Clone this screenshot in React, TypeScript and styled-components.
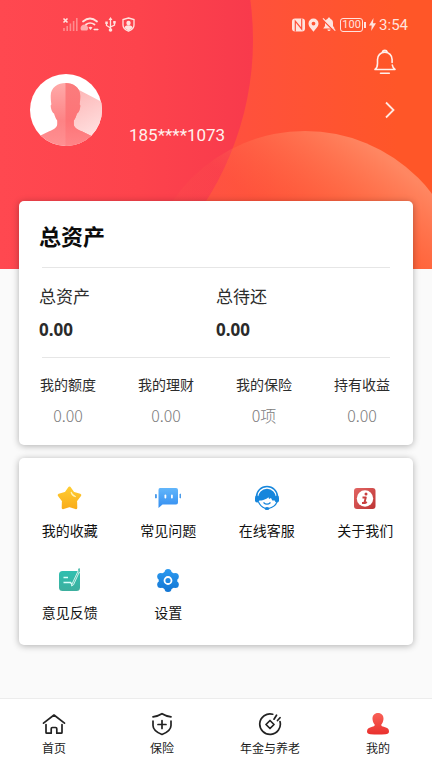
import React from "react";
import styled, { createGlobalStyle } from "styled-components";

const GlobalStyle = createGlobalStyle`
  *, *::before, *::after { box-sizing: border-box; }
  html, body { margin: 0; }
  body {
    background: #fafafa;
    color: #1c1c1c;
    font-family: "Noto Sans", "Noto Sans CJK SC", sans-serif;
  }
  h1, h2, dl, dt, dd, ul, p { margin: 0; padding: 0; }
  ul { list-style: none; }
  button { border: 0; padding: 0; background: none; font: inherit; color: inherit; cursor: pointer; }
  a { color: inherit; text-decoration: none; }
  svg { display: block; }
`;

const Page = styled.div`
  min-height: 100vh;
  display: flex;
  flex-direction: column;
`;

const Hero = styled.header`
  position: relative;
  height: 269px;
  color: #fff;
  overflow: hidden;
  background: linear-gradient(90deg, #ff5040 50%, #ff5628 92%);
`;

const HeroArt = styled.svg`
  position: absolute;
  inset: 0;
  width: 100%;
  height: 100%;
`;

const HeroContent = styled.div`
  position: relative;
  display: flex;
  flex-direction: column;
`;

const StatusBar = styled.div`
  display: flex;
  justify-content: space-between;
  align-items: center;
  height: 49px;
  padding: 0 24px 0 62px;
  color: #ffe3de;
`;

const StatusGroup = styled.div<{ $gap: number }>`
  display: flex;
  align-items: center;
  gap: ${(p) => p.$gap}px;
`;

const Battery = styled.span`
  position: relative;
  width: 23px;
  height: 14px;
  margin: 0 3px 0 1px;
  border: 1px solid currentColor;
  border-radius: 3px;
  font: 11px/12px Roboto, sans-serif;
  text-align: center;

  &::after {
    content: "";
    position: absolute;
    right: -4px;
    top: 3px;
    width: 2px;
    height: 6px;
    background: currentColor;
  }
`;

const Clock = styled.span`
  font: 15px/20px Roboto, sans-serif;
`;

const Toolbar = styled.div`
  display: flex;
  justify-content: flex-end;
  padding-right: 35px;
  height: 25px;
`;

const Profile = styled.div`
  display: flex;
  align-items: flex-start;
  height: 72px;
  padding: 0 36px 0 30px;
`;

const Phone = styled.p`
  flex: 1;
  align-self: flex-end;
  margin-left: 27px;
  font: 17px/22px Roboto, sans-serif;
  color: #fff0ee;
`;

const MoreButton = styled.button`
  align-self: center;
`;

const Content = styled.main`
  position: relative;
  flex: 1;
  display: flex;
  flex-direction: column;
  gap: 13px;
  margin-top: -68px;
  padding: 0 19px 53px;
`;

const Card = styled.section`
  background: #fff;
  border-radius: 5px;
  box-shadow: 0 1px 7px rgba(0, 0, 0, 0.3);
`;

const CardTitle = styled.h1`
  padding: 18px 20px 14px;
  font-size: 22px;
  line-height: 34px;
  font-weight: 700;
  color: #0c0c0c;
`;

const Divider = styled.hr`
  height: 1px;
  margin: 0 23px;
  border: 0;
  background: #e6e6e6;
`;

const Totals = styled.dl`
  display: grid;
  grid-template-columns: 1fr 1fr;
  padding: 15px 20px 14px;
`;

const TotalLabel = styled.dt`
  font-size: 17px;
  line-height: 28px;
  color: #2c2c2c;
`;

const TotalValue = styled.dd`
  padding-top: 6px;
  font-size: 17px;
  line-height: 26px;
  font-weight: 700;
  color: #2a2a2a;
`;

const Stats = styled.dl`
  display: grid;
  grid-template-columns: repeat(4, 1fr);
  padding: 15px 2px 18px 0;
  text-align: center;
`;

const StatLabel = styled.dt`
  font-size: 14px;
  line-height: 24px;
  color: #2c2c2c;
`;

const StatValue = styled.dd`
  padding-top: 6px;
  font-family: "Noto Sans CJK SC", sans-serif;
  font-size: 16px;
  line-height: 24px;
  font-weight: 300;
  color: #7c7c7c;
`;

const Menu = styled.ul`
  display: grid;
  grid-template-columns: repeat(4, 1fr);
  row-gap: 18px;
  padding: 26px 0 15px;
`;

const MenuButton = styled.button`
  display: flex;
  flex-direction: column;
  align-items: center;
  gap: 2px;
  width: 100%;
  padding-left: 3px;
  font-size: 14px;
  line-height: 34px;
  color: #111;
`;

const TabBar = styled.nav`
  display: grid;
  grid-template-columns: repeat(4, 1fr);
  height: 70px;
  background: #fff;
  border-top: 1px solid #ececec;
`;

const Tab = styled.a`
  display: flex;
  flex-direction: column;
  align-items: center;
  gap: 4px;
  padding-top: 13px;
  font-size: 12px;
  line-height: 18px;
  color: #1c1c1c;
`;

const HeroBackdrop = () => (
  <HeroArt viewBox="0 0 432 269" preserveAspectRatio="xMidYMin slice" aria-hidden="true">
    <defs>
      <linearGradient id="disc" gradientUnits="userSpaceOnUse" x1="0" y1="0" x2="253" y2="0">
        <stop offset="0" stopColor="#ff4850" />
        <stop offset="0.55" stopColor="#fd434c" />
        <stop offset="1" stopColor="#f83a4c" />
      </linearGradient>
      <linearGradient id="dome" gradientUnits="userSpaceOnUse" x1="370" y1="145" x2="300" y2="235">
        <stop offset="0" stopColor="#ff8c68" stopOpacity="0.9" />
        <stop offset="1" stopColor="#ff6a48" stopOpacity="0.1" />
      </linearGradient>
    </defs>
    <circle cx="-47" cy="40" r="300" fill="url(#disc)" />
    <circle cx="305" cy="291" r="160" fill="url(#dome)" />
  </HeroArt>
);

const SignalIcon = () => (
  <svg width="16" height="15" viewBox="0 0 16 15" fill="none" stroke="currentColor">
    <path d="M1.500 1.500l4 4m0-4l-4 4" strokeWidth="1.600" />
    <path d="M2 14v-3M5.200 14v-5M8.400 14V6.500M11.600 14V4M14.800 14V1" strokeWidth="1.600" opacity="0.45" />
  </svg>
);

const WifiIcon = () => (
  <svg width="19" height="15" viewBox="0 0 19 15" fill="none" stroke="currentColor">
    <path d="M3 4.500Q10 -1.500 17 4.500M6 7.500Q10 4.500 14.500 7.500" strokeWidth="1.700" strokeLinecap="round" />
    <path d="M8.500 10.500Q10.500 9 12.500 10.500L10.500 13z" fill="currentColor" stroke="none" />
    <path d="M1.500 13.500a3.600 3.600 0 1 1 5.600 0z" fill="currentColor" stroke="none" opacity="0.65" />
    <path d="M13.500 12.500h5M15 11.500v2M17 11.500v2" strokeWidth="1.200" />
  </svg>
);

const UsbIcon = () => (
  <svg width="11" height="15" viewBox="0 0 11 15" fill="none" stroke="currentColor" strokeWidth="1.300">
    <path d="M5.500 2v11M5.500 11L1.500 8.500V6M5.500 10l4-2V5.500" />
    <path d="M5.500 0L7.500 3h-4zM.3 4.500h2.500V7H.3zM8.200 4h2.500v2.500H8.200z" fill="currentColor" stroke="none" />
    <circle cx="5.500" cy="13" r="1.800" fill="currentColor" stroke="none" />
  </svg>
);

const GuardIcon = () => (
  <svg width="13" height="15" viewBox="0 0 13 15" fill="none" stroke="currentColor" strokeWidth="1.300">
    <path d="M6.500 1L12 2.500V8c0 3-2 5-5.500 6.200C3 13 1 11 1 8V2.500z" />
    <circle cx="6.500" cy="6" r="2.200" fill="currentColor" stroke="none" />
    <path d="M2.500 11q0-2.800 4-2.800t4 2.800l-4 2.700z" fill="currentColor" stroke="none" />
  </svg>
);

const NfcIcon = () => (
  <svg width="13" height="14" viewBox="0 0 13 14">
    <rect x="0" y="0.500" width="13" height="13" rx="3" fill="currentColor" />
    <path d="M3.300 13.500V3.200L9.700 11V.5" fill="none" stroke="#ff513d" strokeWidth="1.200" />
  </svg>
);

const PinIcon = () => (
  <svg width="11" height="14" viewBox="0 0 11 14">
    <path fillRule="evenodd" d="M5.500.5a5 5 0 0 1 5 5C10.500 9 7 11.500 5.500 13.800 4 11.500.5 9 .5 5.500a5 5 0 0 1 5-5zm0 3.200a1.900 1.900 0 1 0 0 3.800 1.900 1.900 0 0 0 0-3.800z" fill="currentColor" />
  </svg>
);

const MutedBellIcon = () => (
  <svg width="14" height="15" viewBox="0 0 14 15">
    <path d="M7 .5q1.200 0 1.300 1.200Q11 2.700 11 6v3l1.800 2.500H1.200L3 9V6q0-3.300 2.700-4.300Q5.800.5 7 .5zM5.300 12.500h3.400Q8.300 14 7 14t-1.700-1.500z" fill="currentColor" />
    <path d="M.5 2.500L12 14" stroke="#ff5239" strokeWidth="1.400" />
    <path d="M1 1.300L13.300 13.600" stroke="currentColor" strokeWidth="1.200" />
  </svg>
);

const BoltIcon = () => (
  <svg width="7" height="13" viewBox="0 0 7 13">
    <path d="M4.500 0L0 7.500h2.700L2.200 13 7 5.200H4z" fill="currentColor" />
  </svg>
);

const BellIcon = () => (
  <svg width="24" height="26" viewBox="0 0 24 26" fill="none" stroke="#fff0eb" strokeWidth="1.600" strokeLinejoin="round" strokeLinecap="round">
    <path d="M2 20.500c2-1.500 2.500-3 2.500-6V10.500c0-4 3-7.200 7.300-7.200s7.300 3.200 7.300 7.200v3M2 20.500h20c-1.700-1.200-2.400-2.500-2.700-4.500M9.300 3.300a2.600 2.600 0 0 1 5 0M7.500 24.300h8.800" />
  </svg>
);

const ChevronIcon = () => (
  <svg width="12" height="18" viewBox="0 0 12 18" fill="none" stroke="#ffe9e2" strokeWidth="1.800">
    <path d="M2 1.500L9.500 9 2 16.500" />
  </svg>
);

const Avatar = () => (
  <svg width="72" height="72" viewBox="0 0 72 72" role="img" aria-label="头像">
    <defs>
      <clipPath id="face"><circle cx="36" cy="36" r="36" /></clipPath>
      <clipPath id="half"><path d="M35.500 0H72v72H35.500z" /></clipPath>
      <linearGradient id="skin" gradientUnits="userSpaceOnUse" x1="0" y1="9" x2="0" y2="72">
        <stop offset="0" stopColor="#ffaaa9" />
        <stop offset="0.6" stopColor="#fd8385" />
        <stop offset="1" stopColor="#ff9092" />
      </linearGradient>
      <linearGradient id="skinDark" gradientUnits="userSpaceOnUse" x1="0" y1="9" x2="0" y2="72">
        <stop offset="0" stopColor="#fb7c7d" />
        <stop offset="0.6" stopColor="#fd7477" />
        <stop offset="1" stopColor="#ff8588" />
      </linearGradient>
      <linearGradient id="cast" gradientUnits="userSpaceOnUse" x1="46" y1="20" x2="66" y2="58">
        <stop offset="0" stopColor="#fdb9b9" />
        <stop offset="1" stopColor="#ffdede" />
      </linearGradient>
      <path id="bust" d="M35.500 9C43 9 50.300 13 50.300 22c0 3-.3 6-.7 8.500 1.200.5.700 3-.1 5.500-.7 2-1.500 3-2.500 3.500C46 43 45 45 43.800 46.500V50c0 4 4 5.500 8 7.300L61.500 62V74H9.500V62L19.200 57.300C23.200 55.500 27.200 54 27.200 50v-3.500C26 45 25 43 24 39.500c-1-.5-1.800-1.500-2.500-3.500-.8-2.500-1.300-5-.1-5.500-.4-2.500-.7-5.500-.7-8.500C20.700 13 28 9 35.500 9z" />
    </defs>
    <g clipPath="url(#face)">
      <path d="M0 0h72v72H0z" fill="#fff" />
      <path d="M36 9L50 16.500l23 12V62.500H58L40 52z" fill="url(#cast)" />
      <use href="#bust" fill="url(#skin)" />
      <use href="#bust" fill="url(#skinDark)" clipPath="url(#half)" />
    </g>
  </svg>
);

const StarIcon = () => (
  <svg width="28" height="28" viewBox="0 0 28 28">
    <defs><linearGradient id="gold" x1="0" y1="0" x2="0" y2="1"><stop offset="0" stopColor="#ffcb30" /><stop offset="1" stopColor="#f9ae1b" /></linearGradient></defs>
    <path d="M13.500 4l3.500 5.200 6.800 2-4.200 5.500.2 7L13.500 21.500l-6.300 2.200.2-7-4.200-5.500 6.800-2z" fill="url(#gold)" stroke="url(#gold)" strokeWidth="3" strokeLinejoin="round" />
    <path d="M15.300 8.500q.8 3 4 4" fill="none" stroke="#fff3b8" strokeWidth="1.300" strokeLinecap="round" />
  </svg>
);

const RobotIcon = () => (
  <svg width="28" height="28" viewBox="0 0 28 28">
    <defs><linearGradient id="sky" x1="0" y1="0" x2="0" y2="1"><stop offset="0" stopColor="#62b6fb" /><stop offset="1" stopColor="#338df0" /></linearGradient></defs>
    <path d="M6 4h16q2 0 2 2v12.500q0 2-2 2H8.500l-4 3.500V6q0-2 1.500-2z" fill="url(#sky)" />
    <path d="M1.500 10.500h.8V14h-.8zM26 10h.5v4H26z" fill="#4b9bea" stroke="#4b9bea" strokeLinejoin="round" />
    <rect x="10.500" y="10.500" width="1.800" height="4" rx="0.900" fill="#fff" />
    <rect x="17" y="10.500" width="1.800" height="4" rx="0.900" fill="#fff" />
  </svg>
);

const HeadsetIcon = () => (
  <svg width="28" height="28" viewBox="0 0 28 28" fill="#1686dc">
    <path d="M3.500 13a10.500 10.500 0 0 1 21 0" fill="none" stroke="#1686dc" strokeWidth="1.500" />
    <path d="M14 4.800a9 9 0 0 0-9 9v2.700h3.500c2.500-.5 5-1.500 7-3.200l.5 1.700 2-1 1.300 2.500H23v-2.700a9 9 0 0 0-9-9z" />
    <rect x="2" y="11.500" width="4.200" height="7" rx="2" />
    <rect x="21.800" y="11.500" width="4.200" height="7" rx="2" />
    <path d="M10.500 18.500q3.500 3.500 7 0" fill="none" stroke="#1686dc" strokeWidth="1.200" />
    <path d="M5.500 18q2 4.500 6.500 6.300M24 18q-2 5-8.500 6.500" fill="none" stroke="#1686dc" strokeWidth="1.200" />
    <ellipse cx="14" cy="24.600" rx="2.400" ry="1.500" />
  </svg>
);

const AboutIcon = () => (
  <svg width="28" height="28" viewBox="0 0 28 28">
    <defs><linearGradient id="brick" x1="0" y1="0" x2="1" y2="1"><stop offset="0" stopColor="#e26563" /><stop offset="1" stopColor="#bd3434" /></linearGradient></defs>
    <rect x="3" y="4" width="21.500" height="21" rx="3" fill="url(#brick)" />
    <circle cx="14" cy="14.500" r="8.200" fill="#fff" />
    <circle cx="15" cy="10" r="1.500" fill="#c93f3f" />
    <path d="M11.500 13.500h3.300l-1.500 5.500q1 .2 2.500-1M11 19h2.500" fill="none" stroke="#c93f3f" strokeWidth="1.900" strokeLinejoin="round" />
  </svg>
);

const FeedbackIcon = () => (
  <svg width="28" height="28" viewBox="0 0 28 28">
    <defs><linearGradient id="mint" x1="0" y1="0" x2="0" y2="1"><stop offset="0" stopColor="#2fbfb0" /><stop offset="1" stopColor="#3daf9e" /></linearGradient></defs>
    <rect x="3" y="5" width="21" height="20" rx="3.500" fill="url(#mint)" />
    <path d="M7.500 11.500h4.500M7.500 16.500h7l2 2.500" fill="none" stroke="#dcfffa" strokeWidth="1.300" />
    <path d="M23.300 2.500L16 18l-.5 2 2-1.200L23.300 6z" fill="#53bcae" stroke="#d9f7f2" strokeWidth="0.900" strokeLinejoin="round" />
    <path d="M22.300 4.500l1-2v3.500" fill="none" stroke="#53bcae" strokeWidth="1.200" />
  </svg>
);

const SettingsIcon = () => (
  <svg width="28" height="28" viewBox="0 0 28 28">
    <defs><linearGradient id="azure" gradientUnits="userSpaceOnUse" x1="0" y1="3" x2="0" y2="26"><stop offset="0" stopColor="#2c9af0" /><stop offset="1" stopColor="#1275d3" /></linearGradient></defs>
    <g fill="url(#azure)">
      <circle cx="14" cy="14.500" r="9.300" />
      <circle cx="14" cy="6.500" r="3.500" />
      <circle cx="21.300" cy="10.500" r="3.500" />
      <circle cx="21.300" cy="18.500" r="3.500" />
      <circle cx="14" cy="22.500" r="3.500" />
      <circle cx="6.700" cy="18.500" r="3.500" />
      <circle cx="6.700" cy="10.500" r="3.500" />
    </g>
    <circle cx="14" cy="14.500" r="3.500" fill="none" stroke="#fff" strokeWidth="1.800" />
  </svg>
);

const tabStroke = { fill: "none", stroke: "#222", strokeWidth: 1.7, strokeLinejoin: "round", strokeLinecap: "round" } as const;

const HomeIcon = () => (
  <svg width="24" height="24" viewBox="0 0 24 24" {...tabStroke}>
    <path d="M1.500 11.200L12 3l10.500 8.200M4 12.500V20.500q0 .7.700.7H9.200v-4.500q0-1.200 1.200-1.200h3.200q1.200 0 1.200 1.200v4.500h4.500q.7 0 .7-.7v-8" />
  </svg>
);

const InsuranceIcon = () => (
  <svg width="24" height="24" viewBox="0 0 24 24" {...tabStroke}>
    <path d="M3 4.800Q8.500 4 12 1.700q3.500 2.300 9 3.100M3 9v4.500c0 4 4 7 9 9 5-2 9-5 9-9V9M12 8.500v8M8 12.500h8" />
  </svg>
);

const PensionIcon = () => (
  <svg width="24" height="24" viewBox="0 0 24 24" {...tabStroke}>
    <path d="M14.700 2.200A10.300 10.300 0 1 0 22 9.500M12 8.500l4 4-4 4-4-4zM16 7.200l2.500-4M19.500 8.500l2.500-2.800" />
  </svg>
);

const MeIcon = () => (
  <svg width="24" height="24" viewBox="0 0 24 24">
    <defs><linearGradient id="red" x1="0" y1="0" x2="0" y2="1"><stop offset="0" stopColor="#f96157" /><stop offset="1" stopColor="#e9302d" /></linearGradient></defs>
    <path d="M12 1c3.500 0 5.700 2.500 5.500 6-.2 2.700-1.300 4.500-2.300 5.700 0 1.300 1 1.700 3.300 2.300 3 .8 4.500 2 4.500 4.500 0 1.800-1.500 2.500-3.500 2.700q-7.500.8-15 0c-2-.2-3.500-.9-3.500-2.700 0-2.500 1.500-3.700 4.500-4.500 2.300-.6 3.300-1 3.300-2.300C7.800 11.700 6.700 9.700 6.500 7c-.2-3.500 2-6 5.500-6z" fill="url(#red)" />
  </svg>
);

const totals = [
  { label: "总资产", value: "0.00" },
  { label: "总待还", value: "0.00" },
];

const stats = [
  { label: "我的额度", value: "0.00" },
  { label: "我的理财", value: "0.00" },
  { label: "我的保险", value: "0项" },
  { label: "持有收益", value: "0.00" },
];

const menu = [
  { label: "我的收藏", Icon: StarIcon },
  { label: "常见问题", Icon: RobotIcon },
  { label: "在线客服", Icon: HeadsetIcon },
  { label: "关于我们", Icon: AboutIcon },
  { label: "意见反馈", Icon: FeedbackIcon },
  { label: "设置", Icon: SettingsIcon },
];

const tabs = [
  { label: "首页", Icon: HomeIcon },
  { label: "保险", Icon: InsuranceIcon },
  { label: "年金与养老", Icon: PensionIcon },
  { label: "我的", Icon: MeIcon },
];

export default function App() {
  return (
    <Page>
      <GlobalStyle />
      <Hero>
        <HeroBackdrop />
        <HeroContent>
          <StatusBar>
            <StatusGroup $gap={6}>
              <StatusGroup $gap={2}>
                <SignalIcon />
                <WifiIcon />
              </StatusGroup>
              <UsbIcon />
              <GuardIcon />
            </StatusGroup>
            <StatusGroup $gap={3}>
              <NfcIcon />
              <PinIcon />
              <MutedBellIcon />
              <Battery>100</Battery>
              <BoltIcon />
              <Clock>3:54</Clock>
            </StatusGroup>
          </StatusBar>
          <Toolbar>
            <button type="button" aria-label="消息通知"><BellIcon /></button>
          </Toolbar>
          <Profile>
            <Avatar />
            <Phone>185****1073</Phone>
            <MoreButton type="button" aria-label="个人信息"><ChevronIcon /></MoreButton>
          </Profile>
        </HeroContent>
      </Hero>

      <Content>
        <Card>
          <CardTitle>总资产</CardTitle>
          <Divider />
          <Totals>
            {totals.map(({ label, value }) => (
              <div key={label}>
                <TotalLabel>{label}</TotalLabel>
                <TotalValue>{value}</TotalValue>
              </div>
            ))}
          </Totals>
          <Divider />
          <Stats>
            {stats.map(({ label, value }) => (
              <div key={label}>
                <StatLabel>{label}</StatLabel>
                <StatValue>{value}</StatValue>
              </div>
            ))}
          </Stats>
        </Card>
        <Card>
          <Menu>
            {menu.map(({ label, Icon }) => (
              <li key={label}>
                <MenuButton type="button">
                  <Icon />
                  {label}
                </MenuButton>
              </li>
            ))}
          </Menu>
        </Card>
      </Content>

      <TabBar>
        {tabs.map(({ label, Icon }) => (
          <Tab key={label} href="#">
            <Icon />
            {label}
          </Tab>
        ))}
      </TabBar>
    </Page>
  );
}
